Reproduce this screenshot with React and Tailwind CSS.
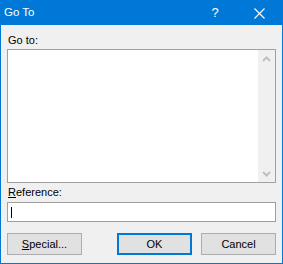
import { useState } from 'react';

const font = "font-['Liberation_Sans',Arial,sans-serif]";

const Chevron = ({ up }) => (
  <svg width="9" height="6" viewBox="0 0 9 6" className="block">
    <path
      d={up ? 'M1 5 L4.5 1.5 L8 5' : 'M1 1 L4.5 4.5 L8 1'}
      fill="none"
      stroke="#c0c0c0"
      strokeWidth="2"
    />
  </svg>
);

const Button = ({ children, primary }) => (
  <button
    className={
      primary
        ? 'w-[75px] h-[22px] bg-[#e1e1e1] border-2 border-[#0078d7] text-[11px] text-black'
        : 'w-[75px] h-[22px] bg-[#e1e1e1] border border-[#adadad] text-[11px] text-black'
    }
  >
    {children}
  </button>
);

export default function App() {
  const [reference, setReference] = useState('');

  return (
    <div className={`w-[283px] h-[264px] bg-[#f0f0f0] border border-[#0078d7] flex flex-col ${font}`}>
      {/* title bar */}
      <div className="h-[24px] bg-[#0078d7] flex items-center text-white text-[11.5px]">
        <span className="pl-[3px] flex-1 leading-none">Go To</span>
        <div className="w-[44px] h-full flex items-center justify-center text-[13px]">?</div>
        <div className="w-[45px] h-full flex items-center justify-center">
          <svg width="11" height="11" viewBox="0 0 11 11">
            <path d="M0.5 0.5 L10.5 10.5 M10.5 0.5 L0.5 10.5" stroke="white" strokeWidth="1.1" />
          </svg>
        </div>
      </div>

      <div className="px-[6px] flex flex-col flex-1 text-black text-[11px]">
        <div className="mt-[6px] h-[18px] flex items-center pl-[1px]">Go to:</div>

        {/* list box */}
        <div className="h-[134px] border border-[#a0a0a0] bg-white flex">
          <div className="flex-1" />
          <div className="w-[17px] bg-[#f0f0f0] flex flex-col justify-between">
            <div className="h-[17px] flex items-center justify-center pt-[1px]">
              <Chevron up />
            </div>
            <div className="h-[17px] flex items-center justify-center">
              <Chevron />
            </div>
          </div>
        </div>

        <div className="h-[19px] flex items-center pl-[1px]">
          <span><span className="underline">R</span>eference:</span>
        </div>

        {/* reference input */}
        <div className="h-[20px] border border-[#a0a0a0] bg-white flex items-center px-[3px] relative">
          <span className="w-px h-[11px] bg-black" />
          <input
            value={reference}
            onChange={(e) => setReference(e.target.value)}
            className="absolute inset-0 opacity-0"
          />
        </div>

        <div className="mt-[11px] flex gap-[9px]">
          <Button>
            <span className="underline">S</span>pecial...
          </Button>
          <div className="flex-1" />
          <Button primary>OK</Button>
          <Button>Cancel</Button>
        </div>
      </div>
    </div>
  );
}
